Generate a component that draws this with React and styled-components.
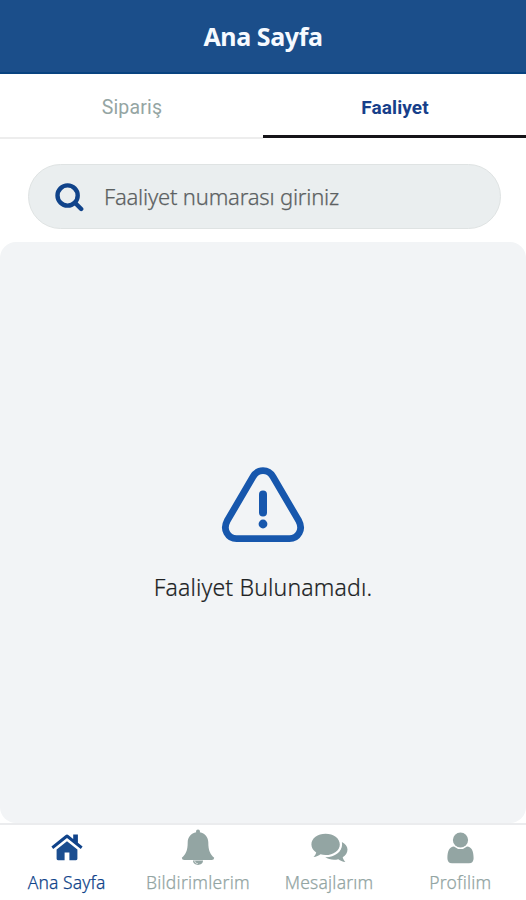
import React from 'react'
import styled, { createGlobalStyle } from 'styled-components'

const NAVY = '#10438a'
const MUTED = '#93a5a3'

const HomeIcon = () => (
  <svg width="32" height="27" viewBox="0 0 32 27" fill="currentColor">
    <path d="M16 7.2 L26.4 15.6 V24.8 Q26.4 26.2 25 26.2 H18.4 V18.4 H13.6 V26.2 H7 Q5.6 26.2 5.6 24.8 V15.6 Z" fill="#1b4e90" />
    <path d="M14.4 1.2 Q16 0 17.6 1.2 L22.2 5 V.6 H26.9 V8.7 L31.6 12.6 L29.8 14.9 L16 3.9 L2.2 14.9 L0.4 12.6 Z" />
  </svg>
)

const BellIcon = () => (
  <svg width="34" height="37" viewBox="0 0 34 37" fill="currentColor">
    <path d="M15 2.6 Q15 .6 17 .6 T19 2.6 L18.8 3.2 C24 4.2 27.3 8.2 27.3 13.2 C27.3 21.5 29.2 25.3 33.2 28.7 Q33 31 30.8 31 H3.2 Q1 31 .8 28.7 C4.8 25.3 6.7 21.5 6.7 13.2 C6.7 8.2 10 4.2 15.2 3.2 Z" />
    <path d="M12 31.6 H22 C22 37.4 12 37.4 12 31.6 Z" />
    <path d="M13.7 31.8 C13.8 33.5 15 34.5 16.8 34.6" fill="none" stroke="#fff" strokeWidth=".7" />
  </svg>
)

const ChatIcon = () => (
  <svg width="37" height="30" viewBox="0 0 37 30" fill="currentColor">
    <path d="M28.8 11.4 C28.8 17.5 22.5 22 14.6 22 C12.8 22 11.1 21.8 9.5 21.3 C7.6 22.7 5.4 23.8 2.5 24.1 C3.8 22.6 4.8 21.1 5.2 19.4 C2.2 17.4 .4 14.6 .4 11.4 C.4 5.4 6.7 .8 14.6 .8 S28.8 5.4 28.8 11.4 Z" />
    <path d="M30.9 9 C34.2 10.8 36.5 13.5 36.5 16.6 C36.5 19.8 34.6 22.5 31.7 24.3 C32 26.1 33.2 27.6 34.4 29.1 C31.5 28.7 29.3 27.7 27.3 26.2 C22.3 27.5 17.6 26.4 14.2 24.2 C23.5 24.5 31.1 18.6 31.1 11.4 C31.1 10.6 31 9.8 30.9 9 Z" />
  </svg>
)

const UserIcon = () => (
  <svg width="27" height="32" viewBox="0 0 27 32" fill="currentColor">
    <circle cx="13.5" cy="8" r="7.6" />
    <path d="M7 14.4 Q13.5 19.8 20 14.4 C24.7 14.6 26.6 19.2 26.6 26.3 Q26.6 31.3 22 31.3 H5 Q.4 31.3 .4 26.3 C.4 19.2 2.3 14.6 7 14.4 Z" />
  </svg>
)

const navItems = [
  { label: 'Ana Sayfa', icon: HomeIcon, active: true },
  { label: 'Bildirimlerim', icon: BellIcon, spacing: '0.25px' },
  { label: 'Mesajlarım', icon: ChatIcon, spacing: '0.2px' },
  { label: 'Profilim', icon: UserIcon, spacing: '0.2px' },
]

export default function App() {
  return (
    <>
      <GlobalStyle />
      <Screen>
        <Header>
          <h1>Ana Sayfa</h1>
        </Header>
        <Tabs>
          <Tab>Sipariş</Tab>
          <Tab $active>Faaliyet</Tab>
        </Tabs>
        <SearchBar>
          <svg width="30" height="30" viewBox="0 0 30 30" fill="none" stroke={NAVY} strokeWidth="4.4" strokeLinecap="round">
            <circle cx="12.6" cy="13.5" r="10.1" />
            <path d="M20.2 21 L26.2 27" />
          </svg>
          <span>Faaliyet numarası giriniz</span>
        </SearchBar>
        <Content>
          <svg width="84" height="77" viewBox="0 0 84 77" fill="none" stroke="#1757ad" strokeWidth="6.8" strokeLinecap="round" strokeLinejoin="round">
            <path d="M32 10.8 Q35.5 4.7 42 4.7 T52 10.8 L77.8 54.8 Q81.3 61.3 78.2 66.8 Q75 72.6 68.5 72.6 H15.5 Q9 72.6 5.8 66.8 Q2.7 61.3 6.2 54.8 Z" />
            <path d="M42 28.5 V46.5" strokeWidth="8" />
            <circle cx="42" cy="58" r="4.4" fill="#1757ad" stroke="none" />
          </svg>
          <p>Faaliyet Bulunamadı.</p>
        </Content>
        <BottomNav>
          {navItems.map(({ label, icon: Icon, active, spacing }) => (
            <NavItem key={label} $active={active} $spacing={spacing}>
              <div className='icon'><Icon /></div>
              <span>{label}</span>
            </NavItem>
          ))}
        </BottomNav>
      </Screen>
    </>
  )
}

const GlobalStyle = createGlobalStyle`
  * {
    box-sizing: border-box;
  }

  body {
    margin: 0;
    background: #fff;
    font-family: "Noto Sans", "Open Sans", sans-serif;
  }
`

const Screen = styled.div`
  display: flex;
  flex-direction: column;
  height: 900px;
  overflow: hidden;
`

const Header = styled.header`
  display: flex;
  align-items: center;
  justify-content: center;
  height: 74px;
  flex-shrink: 0;
  background: #1b4e8a;
  border-bottom: 2px solid #084380;

  h1 {
    margin: 0;
    color: #f6faff;
    font-size: 25px;
    font-weight: 700;
    letter-spacing: -0.4px;
  }
`

const Tabs = styled.nav`
  display: grid;
  grid-template-columns: 1fr 1fr;
  height: 65px;
  flex-shrink: 0;
`

const Tab = styled.div`
  display: flex;
  align-items: center;
  justify-content: center;
  padding-top: ${({ $active }) => ($active ? '6px' : '4px')};
  padding-left: 1px;
  font-family: Roboto, sans-serif;
  font-size: ${({ $active }) => ($active ? '19px' : '19.5px')};
  letter-spacing: ${({ $active }) => ($active ? '0.1px' : '0.2px')};
  font-weight: ${({ $active }) => ($active ? 700 : 400)};
  color: ${({ $active }) => ($active ? '#173f8a' : '#95a5a3')};
  border-bottom: ${({ $active }) => ($active ? '3px solid #151418' : '2px solid #ededed')};
  margin-bottom: ${({ $active }) => ($active ? '1px' : '0')};
`

const SearchBar = styled.div`
  display: flex;
  align-items: center;
  gap: 19px;
  height: 65px;
  flex-shrink: 0;
  margin: 25px 25px 13px 28px;
  padding-left: 26px;
  background: #eaeeef;
  border: 1px solid #dfe3e3;
  border-radius: 33px;

  span {
    padding-bottom: 2px;
    color: #5c6162;
    font-size: 22px;
    font-weight: 300;
    letter-spacing: -0.2px;
    -webkit-text-stroke: 0.25px currentColor;
  }
`

const Content = styled.main`
  display: flex;
  flex-direction: column;
  align-items: center;
  flex: 1;
  padding-top: 224px;
  background: #f2f4f6;
  border-radius: 16px;

  p {
    margin: 26px 0 0;
    color: #202224;
    font-size: 23px;
    line-height: 36px;
    font-weight: 300;
    letter-spacing: 0.17px;
    -webkit-text-stroke: 0.2px currentColor;
  }
`

const BottomNav = styled.footer`
  display: grid;
  grid-template-columns: repeat(4, 1fr);
  height: 77px;
  flex-shrink: 0;
  padding-left: 1px;
  border-top: 2px solid #ebecee;
`

const NavItem = styled.div`
  display: flex;
  flex-direction: column;
  align-items: center;
  color: ${({ $active }) => ($active ? NAVY : MUTED)};

  .icon {
    display: flex;
    align-items: center;
    height: 45px;
  }

  span {
    font-size: 17.5px;
    line-height: 24px;
    font-weight: 300;
    letter-spacing: ${({ $spacing }) => $spacing || '0.1px'};
    white-space: nowrap;
    -webkit-text-stroke: 0.25px currentColor;
  }
`
